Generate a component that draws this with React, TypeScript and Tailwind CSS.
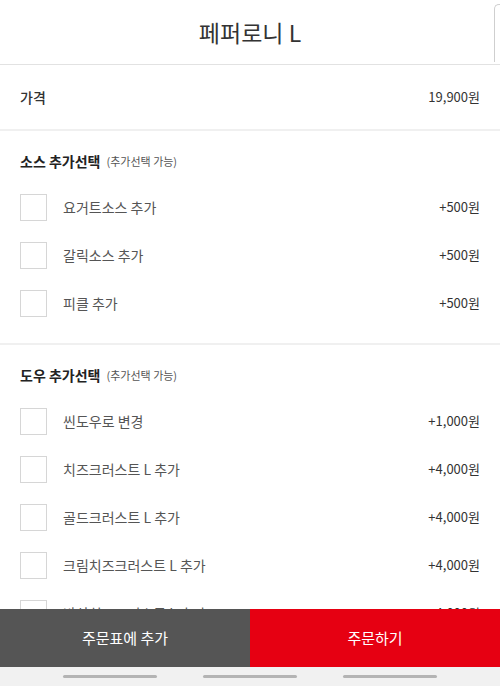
const sauces = [
  { name: "요거트소스 추가", price: "+500원" },
  { name: "갈릭소스 추가", price: "+500원" },
  { name: "피클 추가", price: "+500원" },
];

const doughs = [
  { name: "씬도우로 변경", price: "+1,000원" },
  { name: "치즈크러스트 L 추가", price: "+4,000원" },
  { name: "골드크러스트 L 추가", price: "+4,000원" },
  { name: "크림치즈크러스트 L 추가", price: "+4,000원" },
  { name: "바삭치즈크러스트 L 추가", price: "+4,000원" },
];

const OptionRow = ({ name, price }: { name: string; price: string }) => (
  <label className="flex h-12 items-center px-5">
    <span className="h-[27px] w-[27px] shrink-0 border border-[#d6d6d6] bg-white" />
    <span className="ml-4 flex-1 text-[14px] text-[#555]">{name}</span>
    <span className="text-[13px] text-[#333]">{price}</span>
  </label>
);

const Section = ({
  title,
  items,
}: {
  title: string;
  items: { name: string; price: string }[];
}) => (
  <div className="border-b-2 border-[#f0f0f0] pt-5 pb-4">
    <div className="flex h-5 items-center px-5">
      <span className="text-[14px] font-bold text-[#222]">{title}</span>
      <span className="ml-1.5 text-[11px] text-[#555]">(추가선택 가능)</span>
    </div>
    <div className="mt-3">
      {items.map((it) => (
        <OptionRow key={it.name} {...it} />
      ))}
    </div>
  </div>
);

export default function App() {
  return (
    <div
      className="relative flex h-[686px] w-[500px] flex-col overflow-hidden bg-white"
      style={{ fontFamily: '"Noto Sans CJK KR", "Noto Sans", sans-serif' }}
    >
      {/* edge of the scroll panel */}
      <div className="absolute right-0 top-[4px] h-[58px] w-[6px] rounded-tl-[5px] border-l border-t border-[#cfcfcf]" />

      <header className="flex h-[65px] shrink-0 items-center justify-center border-b border-[#e2e2e2]">
        <h1 className="text-[23px] text-[#333]">페퍼로니 L</h1>
      </header>

      <div className="flex-1 overflow-hidden">
        <div className="flex h-[66px] items-center justify-between border-b-2 border-[#f0f0f0] px-5">
          <span className="text-[14px] font-medium text-[#333]">가격</span>
          <span className="text-[13px] text-[#333]">19,900원</span>
        </div>
        <Section title="소스 추가선택" items={sauces} />
        <Section title="도우 추가선택" items={doughs} />
      </div>

      <div className="flex h-[58px] shrink-0">
        <button className="flex-1 bg-[#555555] text-[15px] text-white">주문표에 추가</button>
        <button className="flex-1 bg-[#e60012] text-[15px] text-white">주문하기</button>
      </div>

      <div className="flex h-[19px] shrink-0 items-center justify-center gap-[46px] bg-[#f1f1f1]">
        <span className="h-[3px] w-[94px] rounded-full bg-[#b4b4b4]" />
        <span className="h-[3px] w-[94px] rounded-full bg-[#b4b4b4]" />
        <span className="h-[3px] w-[94px] rounded-full bg-[#b4b4b4]" />
      </div>
    </div>
  );
}
